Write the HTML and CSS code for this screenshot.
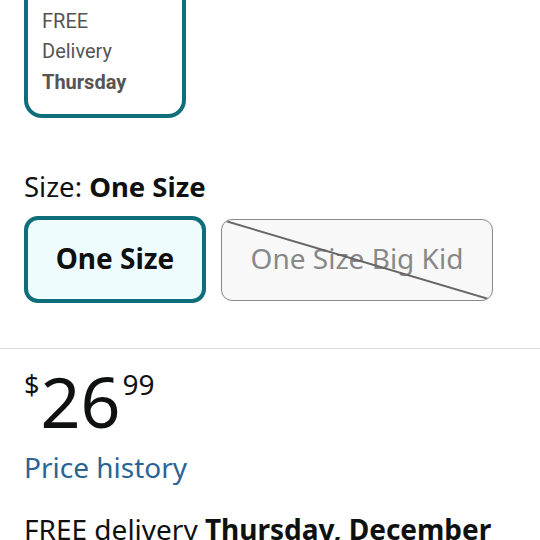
FILE: index.html
```html
<!DOCTYPE html>
<html lang="en">
<head>
    <meta charset="UTF-8">
    <meta name="viewport" content="width=device-width, initial-scale=1.0">
    <title>Product options</title>
    <link rel="stylesheet" href="styles.css">
</head>
<body>

<div class="page">
    <div class="delivery-card">
        <div>$26.99</div>
        <div>FREE</div>
        <div>Delivery</div>
        <div class="strong">Thursday</div>
    </div>

    <div class="size-label">Size: <b>One Size</b></div>

    <div class="size-options">
        <button class="size-btn selected">One Size</button>
        <button class="size-btn unavailable">
            One Size Big Kid
            <svg class="strike" viewBox="0 0 100 100" preserveAspectRatio="none">
                <line x1="0" y1="0" x2="100" y2="100" stroke="#666" stroke-width="2" vector-effect="non-scaling-stroke"/>
            </svg>
        </button>
    </div>
</div>

<hr class="divider">

<div class="page">
    <div class="price">
        <span class="symbol">$</span><span class="whole">26</span><span class="fraction">99</span>
    </div>
    <a class="price-history" href="#">Price history</a>
    <div class="delivery-line">FREE delivery <b>Thursday, December</b></div>
</div>

</body>
</html>
```

FILE: styles.css
```css
body {
    margin: 0;
    background-color: #fff;
    font-family: "Noto Sans", Arial, sans-serif;
    color: #0f1111;
    overflow: hidden;
}

.page {
    padding: 0 24px;
}

/* Cartao de entrega (cortado no topo) */
.delivery-card {
    width: 162px;
    box-sizing: border-box;
    margin-top: -41px;
    padding: 12px 14px 17px 14px;
    border: 4px solid #0f6e7c;
    border-radius: 18px;
    font-family: Roboto, Arial, sans-serif;
    font-size: 20px;
    line-height: 30.5px;
    color: #555;
}

.delivery-card .strong {
    font-weight: bold;
}

.size-label {
    margin-top: 52px;
    font-size: 27.5px;
    line-height: 34px;
}

.size-options {
    display: flex;
    align-items: center;
    gap: 15px;
    margin-top: 12px;
}

.size-btn {
    position: relative;
    box-sizing: border-box;
    font-family: "Noto Sans", Arial, sans-serif;
    font-size: 28px;
    cursor: pointer;
}

.size-btn.selected {
    width: 182px;
    height: 87px;
    padding-bottom: 4px;
    border: 4px solid #0f6e7c;
    border-radius: 14px;
    background-color: #effcfe;
    color: #0f1111;
    font-weight: bold;
}

.size-btn.unavailable {
    width: 272px;
    height: 82px;
    padding-bottom: 4px;
    border: 1px solid #888;
    border-radius: 11px;
    background-color: #f8f8f8;
    color: #888;
    overflow: hidden;
}

.strike {
    position: absolute;
    left: 0;
    top: 0;
    width: 100%;
    height: 100%;
}

.divider {
    margin: 45px 0 0 0;
    border: none;
    border-top: 1px solid #d5d9d9;
}

.price {
    margin-top: 17px;
    display: flex;
    align-items: flex-start;
    line-height: 1;
}

.price .symbol {
    font-size: 27px;
    margin-top: 5px;
}

.price .whole {
    font-size: 70px;
    margin-left: 1px;
}

.price .fraction {
    font-size: 28px;
    margin-left: 2px;
    margin-top: 4px;
}

.price-history {
    display: block;
    margin-top: 12px;
    font-size: 28px;
    color: #2a6496;
    text-decoration: none;
}

.delivery-line {
    margin-top: 24px;
    font-size: 28px;
}
```
